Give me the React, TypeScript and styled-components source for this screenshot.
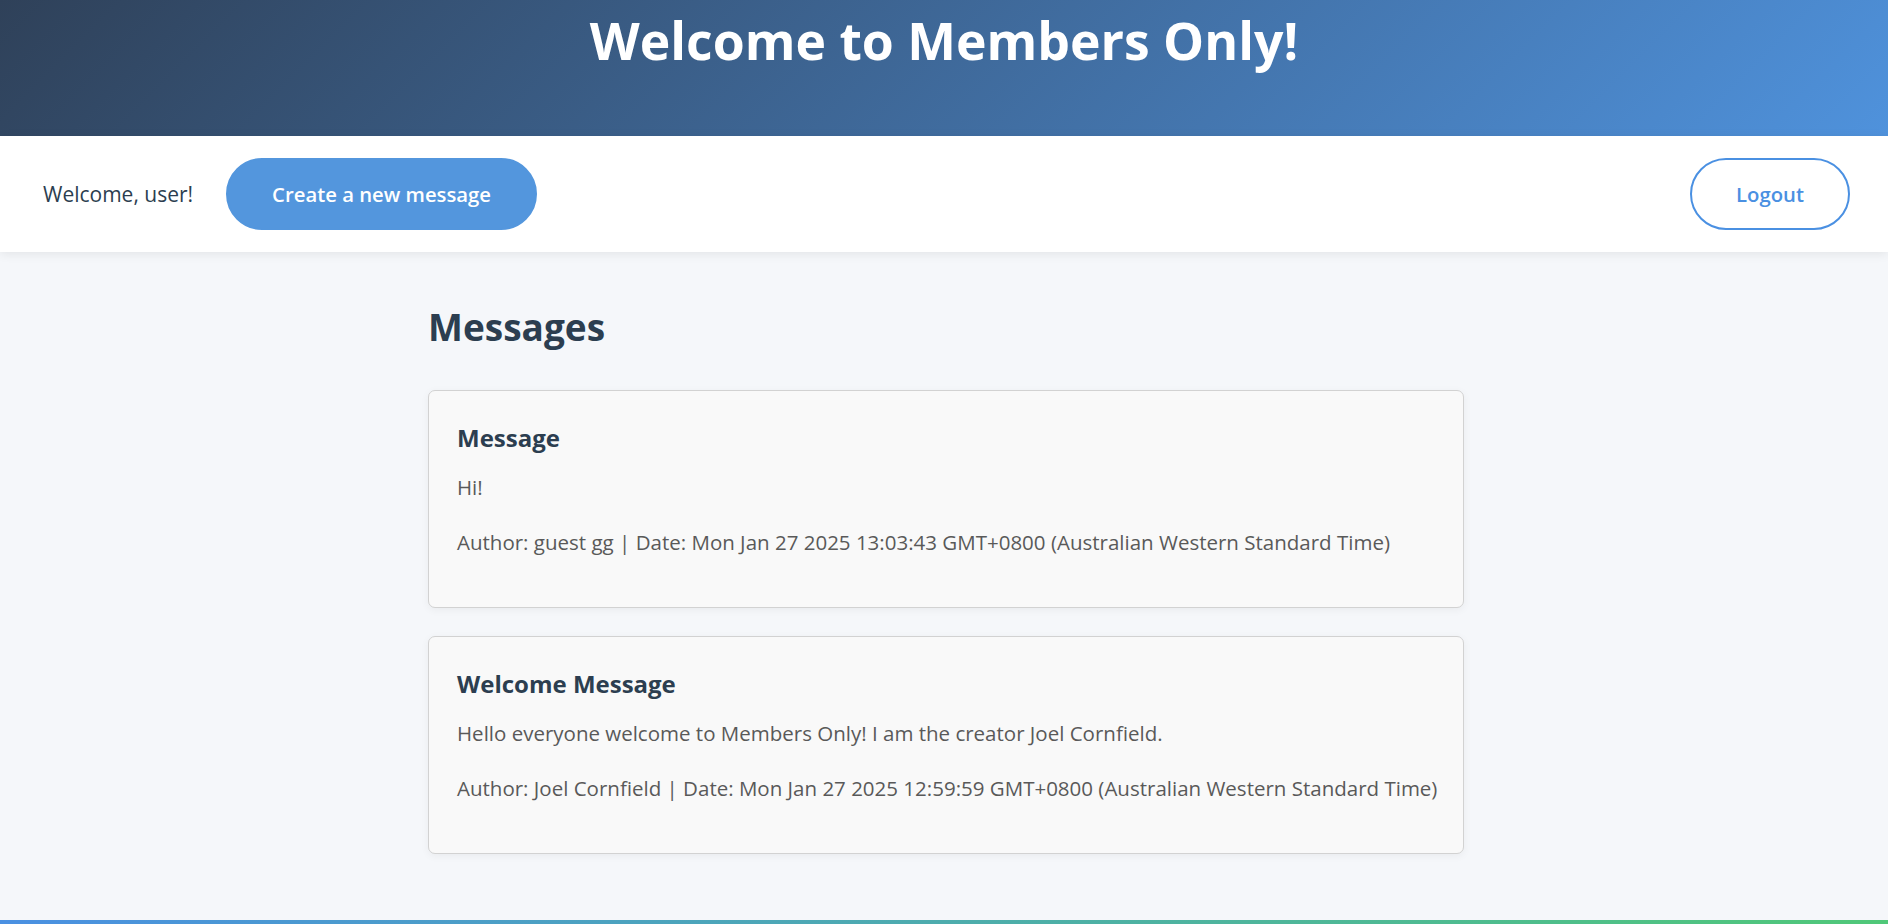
import React from "react";
import styled, { createGlobalStyle } from "styled-components";

const GlobalStyle = createGlobalStyle`
  html, body {
    margin: 0;
    padding: 0;
  }
  body {
    font-family: "Open Sans", "Noto Sans", sans-serif;
    background: #f5f7fa;
    color: #2c3e50;
  }
  * { box-sizing: border-box; }
`;

const Page = styled.div`
  min-height: 100vh;
  display: flex;
  flex-direction: column;
`;

const Header = styled.header`
  height: 136px;
  background: linear-gradient(135deg, #2f4159, #4f92dc);
  display: flex;
  justify-content: center;
  align-items: flex-start;
`;

const Title = styled.h1`
  margin: 0;
  padding-top: 2px;
  font-size: 51.7px;
  line-height: 76px;
  font-weight: 700;
  color: #ffffff;
`;

const Nav = styled.nav`
  height: 116px;
  background: #ffffff;
  display: flex;
  align-items: center;
  padding: 0 38px 0 43px;
  box-shadow: 0 2px 10px rgba(0, 0, 0, 0.08);
  position: relative;
  z-index: 1;
`;

const Greeting = styled.span`
  font-size: 21px;
  font-weight: 500;
  color: #2c3e50;
  margin-right: 33px;
`;

const Spacer = styled.div`
  flex: 1;
`;

const PillButton = styled.button<{ $variant: "solid" | "outline" }>`
  height: 72px;
  padding: 0 44px;
  border-radius: 36px;
  font-family: inherit;
  font-size: 20.3px;
  font-weight: 600;
  cursor: pointer;
  border: 2px solid ${(p) => (p.$variant === "solid" ? "#5396dd" : "#4a90e2")};
  background: ${(p) => (p.$variant === "solid" ? "#5396dd" : "#ffffff")};
  color: ${(p) => (p.$variant === "solid" ? "#ffffff" : "#4a90e2")};
`;

const Main = styled.main`
  flex: 1;
  padding: 49px 0 20px;
`;

const Container = styled.div`
  width: 1040px;
  margin: 0 auto;
  padding-left: 4px;
`;

const Heading = styled.h2`
  margin: 0 0 37px;
  font-size: 37px;
  line-height: 52px;
  font-weight: 700;
  color: #2c3e50;
`;

const List = styled.div`
  display: flex;
  flex-direction: column;
  gap: 28px;
`;

const Card = styled.article`
  background: #f9f9f9;
  border: 1px solid #d2d2d2;
  border-radius: 7px;
  padding: 31px 18px 25px 28px;
  box-shadow: 0 2px 8px rgba(0, 0, 0, 0.05);
`;

const CardTitle = styled.h3`
  margin: 0 0 18px;
  font-size: 24px;
  line-height: 32px;
  font-weight: 700;
  color: #2c3e50;
`;

const CardText = styled.p`
  margin: 0 0 25px;
  font-size: 20.5px;
  line-height: 30px;
  color: #595959;
  white-space: nowrap;
`;

const Footer = styled.footer`
  height: 4px;
  background: linear-gradient(90deg, #4a90e2, #50c878);
`;

const messages = [
  {
    title: "Message",
    body: "Hi!",
    author: "guest gg",
    date: "Mon Jan 27 2025 13:03:43 GMT+0800 (Australian Western Standard Time)",
  },
  {
    title: "Welcome Message",
    body: "Hello everyone welcome to Members Only! I am the creator Joel Cornfield.",
    author: "Joel Cornfield",
    date: "Mon Jan 27 2025 12:59:59 GMT+0800 (Australian Western Standard Time)",
  },
];

export default function App() {
  return (
    <Page>
      <GlobalStyle />
      <Header>
        <Title>Welcome to Members Only!</Title>
      </Header>
      <Nav>
        <Greeting>Welcome, user!</Greeting>
        <PillButton $variant="solid">Create a new message</PillButton>
        <Spacer />
        <PillButton $variant="outline">Logout</PillButton>
      </Nav>
      <Main>
        <Container>
          <Heading>Messages</Heading>
          <List>
            {messages.map((m) => (
              <Card key={m.title}>
                <CardTitle>{m.title}</CardTitle>
                <CardText>{m.body}</CardText>
                <CardText>
                  Author: {m.author} | Date: {m.date}
                </CardText>
              </Card>
            ))}
          </List>
        </Container>
      </Main>
      <Footer />
    </Page>
  );
}
